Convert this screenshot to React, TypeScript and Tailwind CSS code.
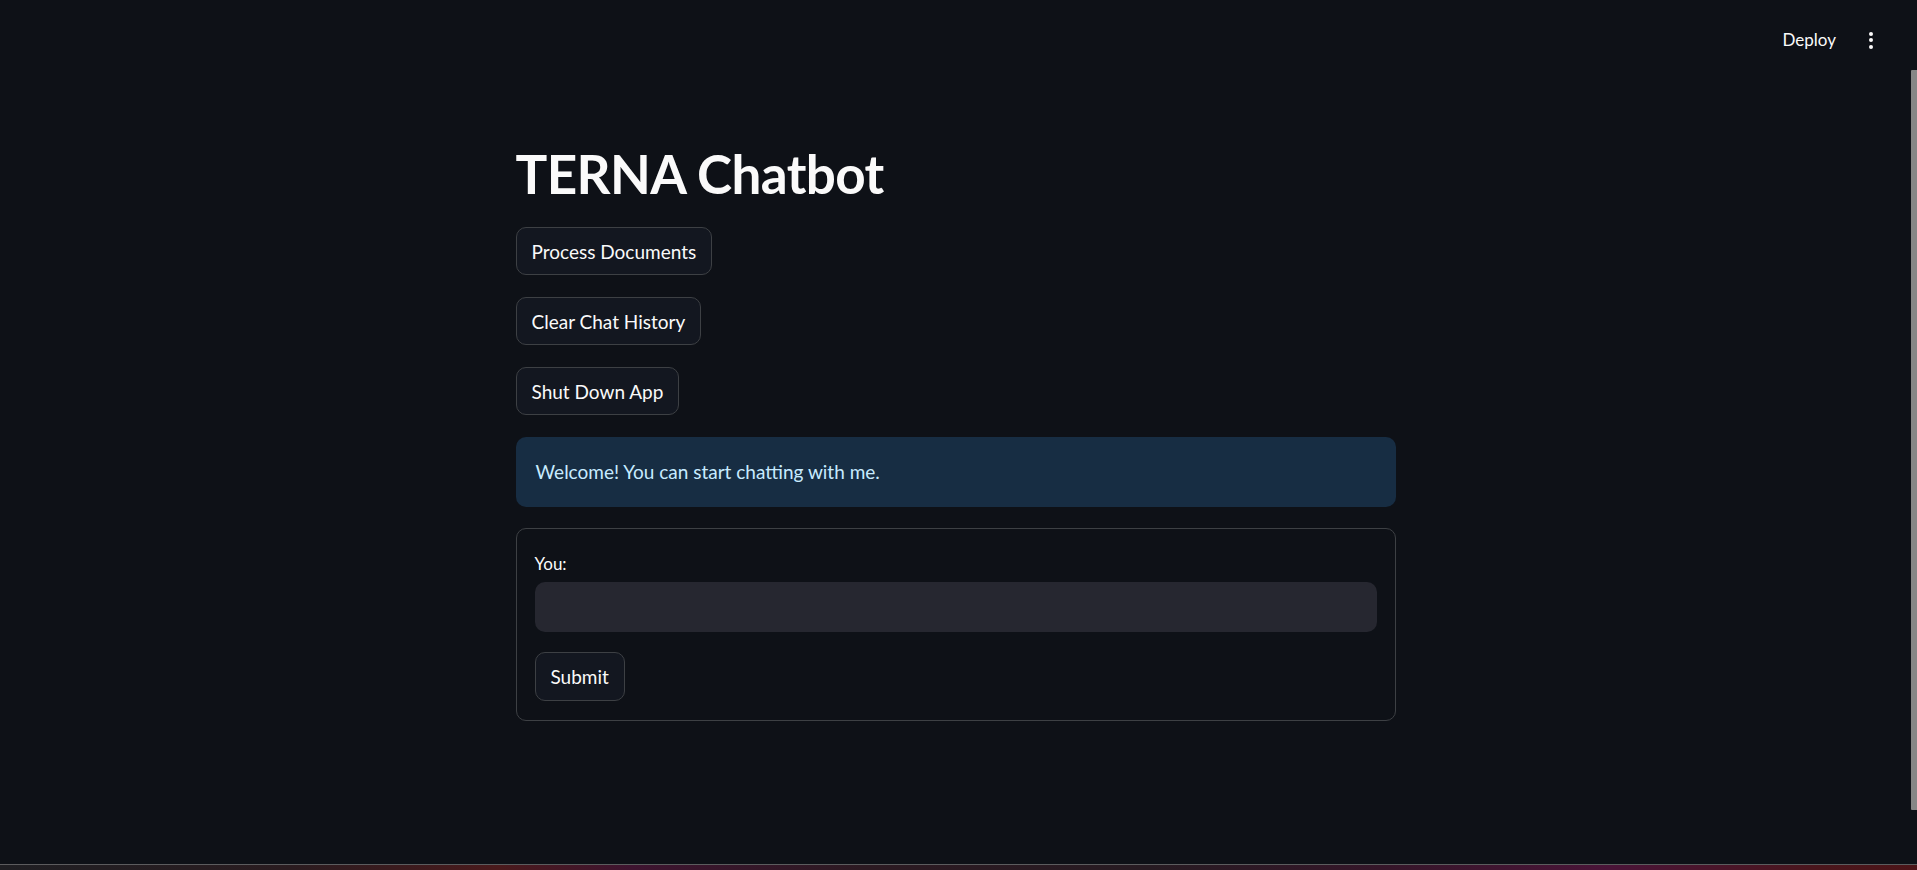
import { useState } from 'react';

const btn =
  'h-[48px] px-[15px] rounded-[10px] border border-[#3d4044] bg-[#131720] text-[19px] text-[#fafafa] leading-none';

export default function App() {
  const [msg, setMsg] = useState('');

  return (
    <div className="flex flex-col h-[870px] w-full bg-[#0e1117] text-[#fafafa] font-['Lato',sans-serif] overflow-hidden">
      <div className="flex flex-row flex-1 min-h-0">
        <div className="flex flex-col flex-1">
          <div className="flex flex-row justify-end items-center h-[80px] pr-[38px] gap-[33px]">
            <span className="text-[17px] text-[#fafafa]">Deploy</span>
            <div className="flex flex-col gap-[2.5px] items-center">
              <span className="w-[4px] h-[4px] rounded-full bg-[#fafafa]" />
              <span className="w-[4px] h-[4px] rounded-full bg-[#fafafa]" />
              <span className="w-[4px] h-[4px] rounded-full bg-[#fafafa]" />
            </div>
          </div>

          <div className="flex flex-col items-start w-[880px] mx-auto">
            <h1 className="text-[53px] font-bold leading-none mt-[67px] mb-[27px] tracking-[-0.6px]">
              TERNA Chatbot
            </h1>
            <div className="flex flex-col items-start gap-[22px] w-full">
              <button className={btn}>Process Documents</button>
              <button className={btn}>Clear Chat History</button>
              <button className={btn}>Shut Down App</button>

              <div className="flex items-center w-full h-[70px] px-[20px] rounded-[10px] bg-[#172d43] text-[19px] text-[#c7ebff]">
                Welcome! You can start chatting with me.
              </div>

              <div className="flex flex-col items-start w-full border border-[#3d4044] rounded-[10px] px-[18px] pt-[24px] pb-[19px] -mt-[1px]">
                <label className="text-[17px] leading-[22px] mb-[7px]">You:</label>
                <input
                  value={msg}
                  onChange={(e) => setMsg(e.target.value)}
                  className="w-full h-[50px] rounded-[10px] bg-[#262730] px-[15px] text-[19px] text-[#fafafa] outline-none"
                />
                <button className={`${btn} mt-[20px] h-[49px]`}>Submit</button>
              </div>
            </div>
          </div>
        </div>
        <div className="flex flex-col w-[6px]">
          <div className="mt-[70px] h-[740px] w-[6px] bg-[#868686] rounded-l-[1px]" />
        </div>
      </div>
      <div className="h-[6px] border-t border-[#5c5c5e] bg-[linear-gradient(90deg,#1f1f23_0%,#2a1c20_15%,#4a1a1c_26%,#3e1430_33%,#2c1a22_45%,#271b22_60%,#351629_72%,#4a1438_84%,#4a161c_95%,#4c1418_100%)]" />
    </div>
  );
}
